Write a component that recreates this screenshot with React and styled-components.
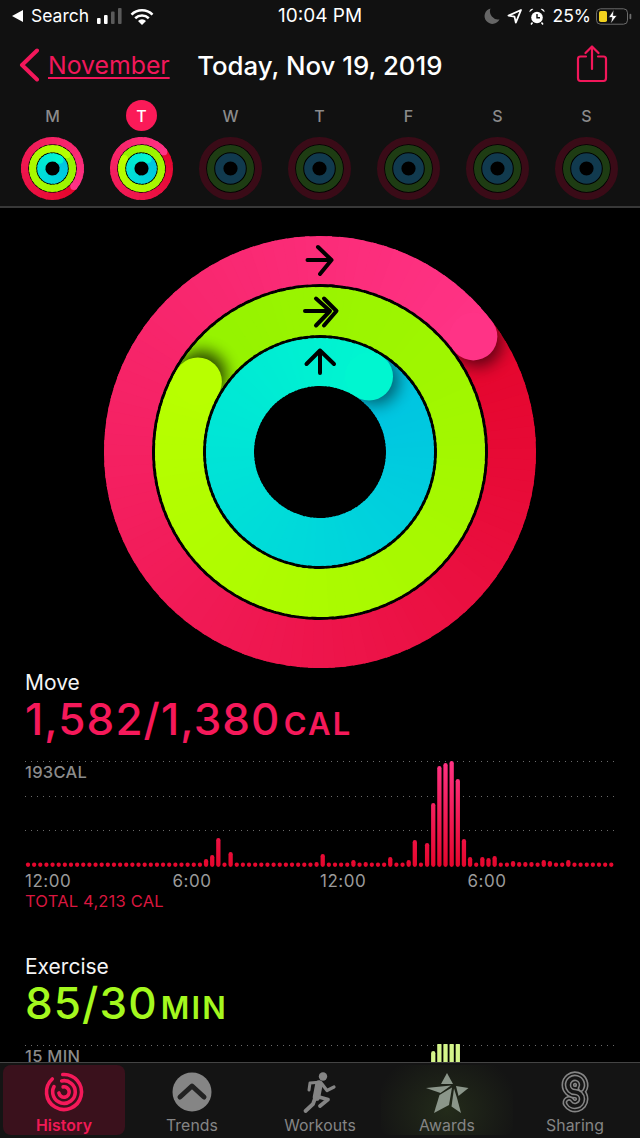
import React from "react";
import styled, { createGlobalStyle } from "styled-components";

const Global = createGlobalStyle`
  html, body { margin: 0; padding: 0; background: #000; }
  * { box-sizing: border-box; }
`;

const Page = styled.div`
  width: 640px;
  height: 1138px;
  display: flex;
  flex-direction: column;
  overflow: hidden;
  background: #000;
  font-family: Inter, "Liberation Sans", sans-serif;
  color: #fff;
`;

const Header = styled.header`
  flex: none;
  height: 208px;
  background: #111;
  border-bottom: 2px solid #383838;
`;

const StatusBar = styled.div`
  height: 34px;
  padding: 0 7px 2px 12px;
  display: grid;
  grid-template-columns: 1fr 85px 1fr;
  align-items: center;
  font-size: 17.5px;
  line-height: 20px;
`;

const StatusLeft = styled.div`
  display: flex;
  align-items: center;
`;

const StatusRight = styled.div`
  display: flex;
  align-items: center;
  justify-content: flex-end;
`;

const Clock = styled.span`
  font-size: 19px;
  white-space: nowrap;
  margin-left: -2px;
`;

const NavBar = styled.nav`
  height: 62px;
  padding: 0 32px 0 19px;
  display: flex;
  align-items: center;
`;

const BackLink = styled.a`
  margin-left: 9px;
  font-size: 24.8px;
  color: #f2175a;
  text-decoration: underline;
  text-decoration-thickness: 2px;
  text-underline-offset: 3px;
`;

const Title = styled.h1`
  margin: 0 0 0 27.5px;
  flex: 1;
  font-size: 25.8px;
  font-weight: 500;
`;

const Week = styled.div`
  padding: 4px 0 0 8px;
  display: grid;
  grid-template-columns: repeat(7, 89px);
`;

const Day = styled.div`
  display: flex;
  flex-direction: column;
  align-items: center;
  gap: 6px;
`;

const DayLabel = styled.div`
  width: 31px;
  height: 31px;
  border-radius: 50%;
  display: flex;
  align-items: center;
  justify-content: center;
  font-size: 16px;
  font-weight: 500;
  color: ${(p) => (p.$today ? "#fff" : "#8b8b8b")};
  background: ${(p) => (p.$today ? "#fb1a58" : "transparent")};
`;

const Main = styled.main`
  flex: 1;
  min-height: 0;
  overflow: hidden;
  background: #000;
  padding-top: 28px;
`;

const HeroRing = styled.div`
  display: flex;
  justify-content: center;
  height: 432px;
`;

const Metric = styled.section`
  margin-top: ${(p) => p.$top}px;
`;

const MetricName = styled.div`
  padding-left: 25px;
  font-size: 21px;
  line-height: 24px;
  color: #f4f4f4;
`;

const MetricValue = styled.div`
  height: 48px;
  padding-left: 25px;
  font-size: 44px;
  line-height: 48px;
  letter-spacing: 1.1px;
  font-weight: 450;
  white-space: nowrap;
  color: ${(p) => p.$color};
`;

const Unit = styled.span`
  font-size: 31px;
  line-height: 1;
  font-weight: 600;
  letter-spacing: 2.2px;
  margin-left: 3px;
`;

const ChartBox = styled.div`
  position: relative;
  margin-top: 17px;
  height: 108px;
`;

const ChartCaption = styled.span`
  position: absolute;
  left: 25px;
  top: 4px;
  font-size: 16.5px;
  line-height: 16px;
  letter-spacing: 0.3px;
  font-weight: 500;
  color: #8b8b8b;
`;

const Axis = styled.div`
  margin-top: 4px;
  padding-left: 25px;
  display: grid;
  grid-template-columns: repeat(4, 147.5px);
  font-size: 17px;
  letter-spacing: 0.5px;
  line-height: 18px;
  color: #9a9a9a;
`;

const Total = styled.div`
  margin-top: 2px;
  padding-left: 25px;
  font-size: 16.5px;
  letter-spacing: 0.2px;
  line-height: 18px;
  color: #d9173f;
`;

const TabBar = styled.footer`
  flex: none;
  height: 76px;
  padding: 2px 3px 3px;
  display: grid;
  grid-template-columns: 122px 134px 122px 132px 1fr;
  background: #141414;
  border-top: 1px solid #444;
`;

const Tab = styled.div`
  display: flex;
  flex-direction: column;
  align-items: center;
  padding-top: 5px;
  border-radius: 8px;
  font-size: 15.8px;
  line-height: 18px;
  letter-spacing: 0.1px;
  font-weight: ${(p) => (p.$active ? 600 : 400)};
  color: ${(p) => (p.$active ? "#f01a56" : "#858585")};
  background: ${(p) =>
    p.$active
      ? "#3a111c"
      : p.$glow
      ? "radial-gradient(ellipse 55% 90% at 50% 65%, rgba(96,135,50,0.2), rgba(96,135,50,0))"
      : "transparent"};
`;

const TabIcon = styled.svg`
  width: 60px;
  height: 44px;
  margin-bottom: 3px;
  display: block;
`;

/* ---------- ring drawing ---------- */

const pt = (deg, r) => {
  const a = (deg * Math.PI) / 180;
  return [r * Math.sin(a), -r * Math.cos(a)];
};
const lerpColor = (a, b, t) => {
  const c = (h, i) => parseInt(h.slice(1 + i * 2, 3 + i * 2), 16);
  const v = [0, 1, 2].map((i) => Math.round(c(a, i) + (c(b, i) - c(a, i)) * t));
  return `rgb(${v[0]},${v[1]},${v[2]})`;
};
const arc = (a0, a1, r) => {
  const [x0, y0] = pt(a0, r);
  const [x1, y1] = pt(a1, r);
  return `M${x0.toFixed(3)} ${y0.toFixed(3)}A${r} ${r} 0 0 1 ${x1.toFixed(3)} ${y1.toFixed(3)}`;
};

const PAINT = [
  { from: "#e4052c", to: "#ff3386", shadow: 0.6 },
  { from: "#94f200", to: "#b8ff00", shadow: 0.75 },
  { from: "#00c2e2", to: "#00f6d0", shadow: 0.5 },
];
const DIM = ["#3a0b17", "#1e3c13", "#113a4e"];
const HERO_GEOMETRY = { box: 216, disc: 168, step: 3, shade: 1, bands: [[192, 48], [141, 48], [90, 48]] };
const MINI_GEOMETRY = { box: 31.5, disc: 24.4, step: 12, shade: 0, bands: [[27.9, 7.2], [19.9, 7.2], [11.2, 8.2]] };

function Ring({ id, r, w, from, to, sweep, shadow, step }) {
  const start = sweep - 360;
  const old = [];
  const fresh = [];
  for (let a = start; a < sweep; a += step) {
    const seg = (
      <path
        key={a}
        d={arc(a, Math.min(a + step * 1.4, sweep), r)}
        fill="none"
        strokeWidth={w}
        stroke={lerpColor(from, to, (a - start) / 360)}
      />
    );
    (a < sweep - 45 ? old : fresh).push(seg);
  }
  const [cx, cy] = pt(sweep, r);
  const [sx, sy] = pt(sweep + (w / r) * 9, r);
  const outer = r + w / 2;
  const inner = r - w / 2;
  return (
    <g>
      <clipPath id={`${id}c`}>
        <path
          clipRule="evenodd"
          d={`M${-outer} 0A${outer} ${outer} 0 1 0 ${outer} 0A${outer} ${outer} 0 1 0 ${-outer} 0ZM${-inner} 0A${inner} ${inner} 0 1 0 ${inner} 0A${inner} ${inner} 0 1 0 ${-inner} 0Z`}
        />
      </clipPath>
      {old}
      {shadow > 0 && (
        <g clipPath={`url(#${id}c)`}>
          <circle cx={sx} cy={sy} r={w / 2} fill="#000" opacity={shadow} filter={`url(#${id}b)`} />
        </g>
      )}
      {fresh}
      <circle cx={cx} cy={cy} r={w / 2} fill={to} />
      <filter id={`${id}b`} x="-80%" y="-80%" width="260%" height="260%">
        <feGaussianBlur stdDeviation={w / 6} />
      </filter>
    </g>
  );
}

function Rings({ id, size, geometry, sweeps, arrows }) {
  const { box, disc, bands, shade, step } = geometry;
  return (
    <svg width={size} height={size} viewBox={`${-box} ${-box} ${box * 2} ${box * 2}`} style={{ display: "block" }}>
      <circle r={disc} fill="#000" />
      {bands.map(([r, w], i) =>
        sweeps ? (
          <Ring
            key={i}
            id={`${id}-${i}`}
            r={r}
            w={w}
            step={step}
            from={PAINT[i].from}
            to={PAINT[i].to}
            shadow={PAINT[i].shadow * shade}
            sweep={sweeps[i]}
          />
        ) : (
          <circle key={i} r={r} fill="none" stroke={DIM[i]} strokeWidth={w} />
        )
      )}
      {arrows && (
        <g fill="none" stroke="#000" strokeWidth="4" strokeLinecap="round" strokeLinejoin="round">
          <path d="M-12.5 -192H11.5M-2 -205L11.5 -192L0 -178" />
          <path d="M-15 -141H6.5M-4 -153.5L10 -141L-4 -126.5M4 -153.5L16.5 -141L4 -126.5" />
          <path d="M0 -79V-101.5M-13.5 -88L0 -101.5L14 -88" />
        </g>
      )}
    </svg>
  );
}

/* ---------- chart ---------- */

const moveTops = {
  29: 859, 30: 855, 31: 838, 33: 852, 47: 862, 48: 854, 53: 860, 55: 862, 59: 857, 62: 860,
  63: 840, 65: 843, 66: 803, 67: 766, 68: 763, 69: 761, 70: 779, 71: 839, 72: 857, 74: 857,
  75: 858, 76: 856, 79: 861, 80: 862, 81: 862, 82: 862, 84: 860, 85: 861, 88: 860,
};
const moveBars = Array.from({ length: 96 }, (_, i) => (moveTops[i] ? 867 - moveTops[i] : 4.4));
const exerciseBars = Array.from({ length: 96 }, (_, i) =>
  i === 66 ? 100 : i > 66 && i <= 70 ? 108 : 0
);

function Chart({ id, bars, from, to, caption }) {
  return (
    <ChartBox>
      <svg width="640" height="108" viewBox="0 0 640 108" style={{ display: "block" }}>
        <defs>
          <linearGradient id={id} gradientUnits="userSpaceOnUse" x1="0" y1="107" x2="0" y2="0">
            <stop offset="0" stopColor={from} />
            <stop offset="1" stopColor={to} />
          </linearGradient>
        </defs>
        {[1, 36, 70].map((y) => (
          <line key={y} x1="25" x2="614" y1={y + 0.5} y2={y + 0.5} stroke="#6a6a6a" strokeDasharray="1 5" />
        ))}
        {bars.map((h, i) =>
          h > 0 ? (
            <rect key={i} x={25.85 + i * 6.14} y={107 - h} width="4.3" height={h} rx="2.15" fill={`url(#${id})`} />
          ) : null
        )}
      </svg>
      <ChartCaption>{caption}</ChartCaption>
    </ChartBox>
  );
}

/* ---------- icons ---------- */

const StatusSvg = ({ w, h, margin, children }) => (
  <svg width={w} height={h} viewBox={`0 0 ${w} ${h}`} style={{ margin, display: "block" }}>
    {children}
  </svg>
);

const Back = () => (
  <StatusSvg w={12} h={12} margin="0 7px 0 0">
    <path d="M0 6L11 0V12Z" fill="#fff" />
  </StatusSvg>
);

const Signal = () => (
  <StatusSvg w={26} h={16} margin="0 7px 0 8px">
    <rect x="0" y="10" width="3.6" height="6" rx="1" fill="#fff" />
    <rect x="7" y="7" width="3.6" height="9" rx="1" fill="#fff" />
    <rect x="14" y="3.5" width="3.6" height="12.5" rx="1" fill="#5a5a5a" />
    <rect x="21" y="0" width="3.6" height="16" rx="1" fill="#5a5a5a" />
  </StatusSvg>
);

const Wifi = () => (
  <StatusSvg w={24} h={17}>
    <g fill="none" stroke="#fff" strokeWidth="2.6">
      <path d="M1.5 6.6A15 15 0 0 1 22.5 6.6" />
      <path d="M5.2 10.2A10 10 0 0 1 18.8 10.2" />
    </g>
    <path d="M8 13A5.6 5.6 0 0 1 16 13L12 17Z" fill="#fff" />
  </StatusSvg>
);

const Moon = () => (
  <StatusSvg w={16} h={16} margin="0 7px 0 0">
    <path d="M6.5 0.5A7.8 7.8 0 1 0 15.5 11.2A8 8 0 0 1 6.5 0.5Z" fill="#666" />
  </StatusSvg>
);

const Locate = () => (
  <StatusSvg w={15} h={15} margin="0 7px 0 0">
    <path d="M14 1L1.5 6.6L7.5 7.6L8.8 13.6Z" fill="none" stroke="#fff" strokeWidth="1.8" strokeLinejoin="round" />
  </StatusSvg>
);

const Alarm = () => (
  <StatusSvg w={16} h={17} margin="0 8px 0 0">
    <circle cx="8" cy="9.5" r="5.8" fill="#fff" />
    <path d="M8 6V9.8H11" fill="none" stroke="#111" strokeWidth="1.4" />
    <path d="M0.5 4.2A3 3 0 0 1 4.4 1ZM15.5 4.2A3 3 0 0 0 11.6 1Z" fill="#fff" />
    <path d="M3.5 14.5L2 16.5M12.5 14.5L14 16.5" stroke="#fff" strokeWidth="1.5" />
  </StatusSvg>
);

const Battery = () => (
  <StatusSvg w={37} h={17} margin="0 0 0 5px">
    <rect x="0.5" y="0.8" width="31" height="15.4" rx="4" fill="none" stroke="#6c6c6c" />
    <rect x="3" y="3" width="8" height="11" rx="1.8" fill="#f2d21e" />
    <rect x="33.5" y="5.8" width="1.8" height="5.4" rx="0.9" fill="#6c6c6c" />
    <path d="M18 1.5L12.5 9.5H16L14.5 16L21 7.5H17.2Z" fill="#fff" stroke="#111" strokeWidth="0.7" />
  </StatusSvg>
);

const Chevron = () => (
  <svg width="20" height="34" viewBox="0 0 20 34" style={{ display: "block" }}>
    <path d="M18 2.5L3 17L18 31.5" fill="none" stroke="#f2175a" strokeWidth="4" strokeLinecap="round" strokeLinejoin="round" />
  </svg>
);

const Share = () => (
  <svg width="32" height="38" viewBox="0 0 32 38" style={{ display: "block", marginTop: "-2px" }}>
    <g fill="none" stroke="#f2175a" strokeWidth="2.2" strokeLinecap="round" strokeLinejoin="round">
      <path d="M10 11.5H4.5Q2 11.5 2 14V33Q2 36 4.5 36H27.5Q30 36 30 33V14Q30 11.5 27.5 11.5H22" />
      <path d="M16 24V2M9.5 8L16 1.5L22.5 8" />
    </g>
  </svg>
);

const arcRing = (r, gapStart, gapEnd) => {
  const [x0, y0] = pt(gapEnd, r);
  const [x1, y1] = pt(gapStart + 360, r);
  return `M${x0.toFixed(2)} ${y0.toFixed(2)}A${r} ${r} 0 1 1 ${x1.toFixed(2)} ${y1.toFixed(2)}`;
};

const HistoryIcon = () => (
  <TabIcon viewBox="-30 -22 60 44">
    <g fill="none" stroke="#f5195a" strokeWidth="3.6" strokeLinecap="round">
      <path d={arcRing(17.5, -42, -4)} />
      <path d={arcRing(11.3, -62, -12)} />
      <path d={arcRing(5.2, -100, -10)} />
    </g>
  </TabIcon>
);

const TrendsIcon = () => (
  <TabIcon viewBox="-30 -22 60 44">
    <circle r="19.5" fill="#858585" />
    <path d="M-12 5L0 -6L12 5" fill="none" stroke="#222" strokeWidth="5" strokeLinecap="round" strokeLinejoin="round" />
  </TabIcon>
);

const WorkoutsIcon = () => (
  <TabIcon viewBox="290 1069 60 44">
    <circle cx="323" cy="1075.5" r="4.2" fill="#858585" />
    <g fill="none" stroke="#858585" strokeLinecap="round" strokeLinejoin="round">
      <path d="M319 1083L316.5 1096" strokeWidth="7.5" />
      <path d="M316 1081.5L310 1082L309 1089" strokeWidth="3" />
      <path d="M322 1083L327 1089.5L334 1086" strokeWidth="3.2" />
      <path d="M319 1096L328 1098.5L320 1105" strokeWidth="3.8" />
      <path d="M315.5 1096L313 1103L305.5 1110" strokeWidth="3.8" />
    </g>
  </TabIcon>
);

const AwardsIcon = () => (
  <TabIcon viewBox="417 1069 60 44">
    <g fill="#8b968a">
      <path d="M447 1072L441 1083L453 1083Z" />
      <path d="M426 1087L451 1084.5L440.5 1092Z" />
      <path d="M434 1112L439.5 1094L452 1086.5L449 1104Z" />
      <path d="M454 1087.5L451.5 1105.5L461 1112L457 1097Z" />
      <path d="M456 1085L468.5 1087L458.5 1095Z" />
    </g>
  </TabIcon>
);

const S_PATH =
  "M581 1087.5A7 7 0 1 0 568 1084A7 7 0 0 0 575 1091A7 7 0 0 1 582 1098A7 7 0 0 1 569 1101.5";

const SharingIcon = () => (
  <TabIcon viewBox="545 1069 60 44">
    <g fill="none" strokeLinecap="round">
      <path d={S_PATH} stroke="#858585" strokeWidth="13" />
      <path d={S_PATH} stroke="#151515" strokeWidth="9.8" />
      <path d={S_PATH} stroke="#858585" strokeWidth="6.6" />
      <path d={S_PATH} stroke="#151515" strokeWidth="3.4" />
    </g>
  </TabIcon>
);

const days = [
  { l: "M", s: [490, 406, 398] },
  { l: "T", s: [413, 660, 393], today: true },
  { l: "W" },
  { l: "T" },
  { l: "F" },
  { l: "S" },
  { l: "S" },
];

export default function App() {
  return (
    <Page>
      <Global />
      <Header>
        <StatusBar>
          <StatusLeft>
            <Back />
            <span>Search</span>
            <Signal />
            <Wifi />
          </StatusLeft>
          <Clock>10:04 PM</Clock>
          <StatusRight>
            <Moon />
            <Locate />
            <Alarm />
            <span>25%</span>
            <Battery />
          </StatusRight>
        </StatusBar>
        <NavBar>
          <Chevron />
          <BackLink>November</BackLink>
          <Title>Today, Nov 19, 2019</Title>
          <Share />
        </NavBar>
        <Week>
          {days.map((d, i) => (
            <Day key={i}>
              <DayLabel $today={d.today}>{d.l}</DayLabel>
              <Rings id={`d${i}`} size={63} geometry={MINI_GEOMETRY} sweeps={d.s} />
            </Day>
          ))}
        </Week>
      </Header>
      <Main>
        <HeroRing>
          <Rings id="hero" size={432} geometry={HERO_GEOMETRY} sweeps={[413, 660, 393]} arrows />
        </HeroRing>
        <Metric $top={3}>
          <MetricName>Move</MetricName>
          <MetricValue $color="#f5195a">
            1,582/1,380<Unit>CAL</Unit>
          </MetricValue>
          <Chart id="moveBars" bars={moveBars} from="#e5062c" to="#ff3384" caption="193CAL" />
          <Axis>
            <span>12:00</span>
            <span>6:00</span>
            <span>12:00</span>
            <span>6:00</span>
          </Axis>
          <Total>TOTAL 4,213 CAL</Total>
        </Metric>
        <Metric $top={45}>
          <MetricName>Exercise</MetricName>
          <MetricValue $color="#a4f81e">
            85/30<Unit>MIN</Unit>
          </MetricValue>
          <Chart id="exBars" bars={exerciseBars} from="#d4f58a" to="#d4f58a" caption="15 MIN" />
        </Metric>
      </Main>
      <TabBar>
        <Tab $active>
          <HistoryIcon />
          History
        </Tab>
        <Tab>
          <TrendsIcon />
          Trends
        </Tab>
        <Tab>
          <WorkoutsIcon />
          Workouts
        </Tab>
        <Tab $glow>
          <AwardsIcon />
          Awards
        </Tab>
        <Tab>
          <SharingIcon />
          Sharing
        </Tab>
      </TabBar>
    </Page>
  );
}
